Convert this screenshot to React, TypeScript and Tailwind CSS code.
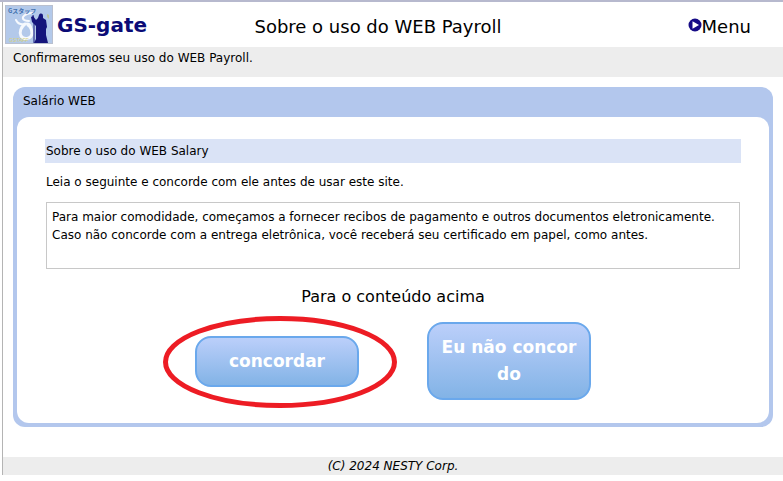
function Logo() {
  return (
    <svg width="48" height="39" viewBox="0 0 48 39" role="img" aria-label="G-Staff" className="shrink-0">
      <rect width="48" height="39" fill="#b3c9ea" />
      <rect x="0.500" y="0.500" width="47" height="38" fill="none" stroke="#b9c0cf" />
      <g fill="none" stroke="#f6f9fd" strokeLinecap="round" strokeLinejoin="round">
        <path d="M28 8c-4 0-8 1-10 4-1 3 3 4 6 4" strokeWidth="2" />
        <path d="M11 15c2 4 5 5 9 4 3-1 5 0 6 3" strokeWidth="2" />
        <path d="M20 19c-4 3-6 8-4 12 3 4 10 3 11-2 0-4-1-7-4-9" strokeWidth="3" />
      </g>
      <path
        d="M34 10c1-2 4-2 4 1v2l3 2 1 7-1 2v6l2 8H29l2-4v-13l-4-4-1-5 2-1 3 4 2-2z"
        fill="#15157c"
      />
      <path d="M28 10l1 8v20" stroke="#15157c" fill="none" />
      <path d="M42 9l2 1v4l-2-2z" fill="#bcc69c" />
      <text x="3" y="8" fontSize="6" fontWeight="700" fill="#3f6fae" fontFamily="Noto Sans CJK JP, sans-serif">
        Gスタッフ
      </text>
      <text x="4" y="37" fontSize="5" fontStyle="italic" fill="#d8d27c" fontFamily="Liberation Sans, sans-serif">
        GSTAFF
      </text>
    </svg>
  );
}

const actionButton =
  "w-[164px] rounded-2xl border-2 border-[#6aa8ec] bg-linear-to-b from-[#bbcffa] to-[#82b3e6] px-2 py-[10px] text-[17px] leading-[27px] font-bold text-white";

export default function App() {
  return (
    <div className="border-t-2 border-[#b7b9ce] bg-white pl-[2px] font-['DejaVu_Sans',sans-serif] text-xs leading-[18px] text-black">
      <div className="border-l border-[#b4b4b4]">
        <header className="grid h-[45px] grid-cols-[1fr_auto_1fr] items-center pr-8 pl-[2px]">
          <div className="flex items-center gap-1">
            <Logo />
            <span className="text-xl font-bold text-[#0b0b76]">GS-gate</span>
          </div>
          <h1 className="pt-1 text-lg">Sobre o uso do WEB Payroll</h1>
          <a href="#menu" className="flex items-center justify-self-end text-lg">
            <svg width="14" height="14" viewBox="0 0 14 14" aria-hidden="true">
              <circle cx="7" cy="7" r="6.500" fill="#160b86" />
              <path d="M4.500 3.200L11 7l-6.500 3.800z" fill="#fff" />
            </svg>
            <span className="pt-1">Menu</span>
          </a>
        </header>
        <p className="h-[30px] bg-[#ededed] px-[10px] pt-[2px]">Confirmaremos seu uso do WEB Payroll.</p>

        <main className="px-[10px] pt-[10px] pb-[30px]">
          <section className="rounded-xl bg-[#b3c7ed] px-1 pb-1">
            <h2 className="px-[6px] pt-[5px] pb-[7px]">Salário WEB</h2>
            <div className="rounded-xl bg-white px-7 pt-[22px] pb-[23px]">
              <h3 className="bg-[#dae3f6] px-px py-[3px]">Sobre o uso do WEB Salary</h3>
              <p className="px-px pt-[10px] pb-[11px]">Leia o seguinte e concorde com ele antes de usar este site.</p>
              <div className="mx-px min-h-[67px] border border-[#c8c8c8] px-[5px] py-[5px]">
                <p>Para maior comodidade, começamos a fornecer recibos de pagamento e outros documentos eletronicamente.</p>
                <p>Caso não concorde com a entrega eletrônica, você receberá seu certificado em papel, como antes.</p>
              </div>
              <p className="pt-4 text-center text-base leading-6">Para o conteúdo acima</p>
              <div className="mt-[13px] flex items-center justify-center gap-[68px]">
                <div className="relative">
                  <button type="button" className={actionButton}>concordar</button>
                  <svg
                    className="pointer-events-none absolute -top-5 -left-8"
                    width="234"
                    height="92"
                    viewBox="0 0 234 92"
                    aria-hidden="true"
                  >
                    <ellipse cx="117" cy="46" rx="114.500" ry="43.500" fill="none" stroke="#ed1c24" strokeWidth="5" />
                  </svg>
                </div>
                <button type="button" className={actionButton}>
                  Eu não concor
                  <br />
                  do
                </button>
              </div>
            </div>
          </section>
        </main>

        <footer className="bg-[#ededed] text-center italic">(C) 2024 NESTY Corp.</footer>
      </div>
    </div>
  );
}
